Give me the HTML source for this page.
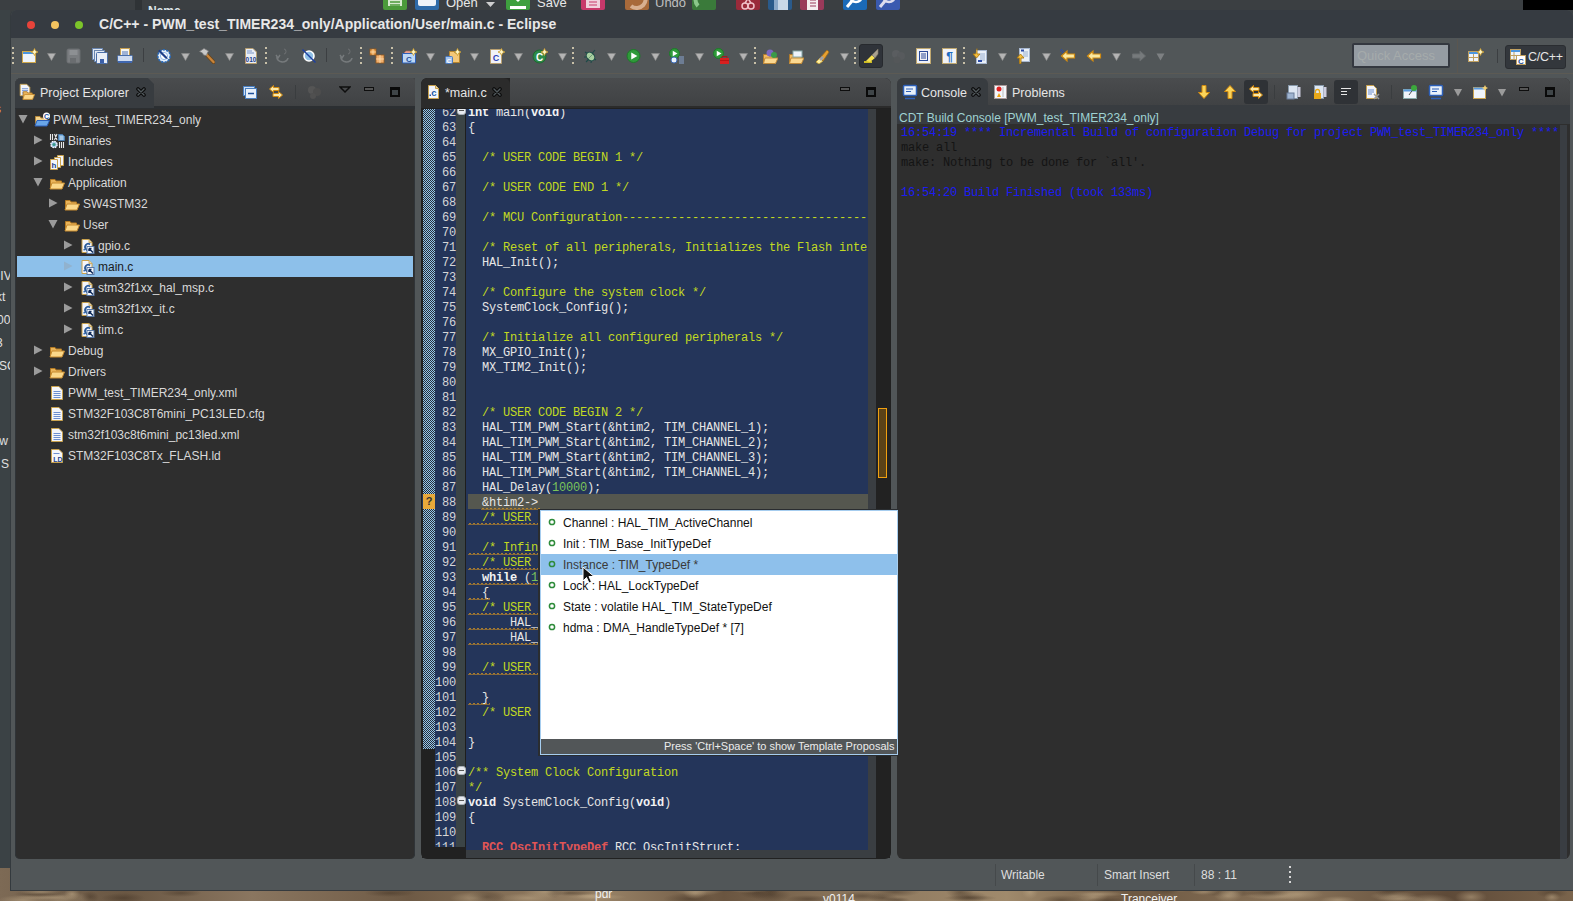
<!DOCTYPE html>
<html><head><meta charset="utf-8">
<style>
*{margin:0;padding:0;box-sizing:border-box}
html,body{width:1573px;height:901px;overflow:hidden;background:#3b3f42;font-family:"Liberation Sans",sans-serif;position:relative}
.a{position:absolute}
.mono{font-family:"Liberation Mono",monospace}
/* desktop */
#wall{left:0;top:868px;width:1573px;height:33px;background:radial-gradient(19px 7px at 487px 29px,rgba(60,45,32,.45),transparent),radial-gradient(27px 3px at 970px 30px,rgba(60,45,32,.45),transparent),radial-gradient(14px 6px at 960px 24px,rgba(60,45,32,.45),transparent),radial-gradient(20px 4px at 1107px 33px,rgba(60,45,32,.45),transparent),radial-gradient(24px 6px at 474px 30px,rgba(190,168,135,.55),transparent),radial-gradient(10px 4px at 1518px 20px,rgba(60,45,32,.45),transparent),radial-gradient(8px 5px at 1552px 29px,rgba(190,168,135,.55),transparent),radial-gradient(20px 6px at 968px 29px,rgba(60,45,32,.45),transparent),radial-gradient(22px 4px at 808px 31px,rgba(60,45,32,.45),transparent),radial-gradient(23px 4px at 748px 21px,rgba(190,168,135,.55),transparent),radial-gradient(28px 5px at 528px 30px,rgba(190,168,135,.55),transparent),radial-gradient(26px 5px at 862px 28px,rgba(60,45,32,.45),transparent),radial-gradient(15px 5px at 1093px 29px,rgba(190,168,135,.55),transparent),radial-gradient(27px 4px at 1396px 20px,rgba(60,45,32,.45),transparent),radial-gradient(25px 7px at 1430px 33px,rgba(190,168,135,.55),transparent),radial-gradient(14px 7px at 1165px 21px,rgba(60,45,32,.45),transparent),radial-gradient(23px 6px at 546px 24px,rgba(190,168,135,.55),transparent),radial-gradient(21px 4px at 181px 25px,rgba(60,45,32,.45),transparent),radial-gradient(21px 3px at 41px 24px,rgba(190,168,135,.55),transparent),radial-gradient(9px 6px at 90px 29px,rgba(60,45,32,.45),transparent),radial-gradient(16px 7px at 1471px 29px,rgba(190,168,135,.55),transparent),radial-gradient(10px 3px at 483px 20px,rgba(190,168,135,.55),transparent),radial-gradient(14px 6px at 1228px 28px,rgba(190,168,135,.55),transparent),radial-gradient(30px 3px at 597px 29px,rgba(190,168,135,.55),transparent),radial-gradient(12px 6px at 695px 25px,rgba(190,168,135,.55),transparent),radial-gradient(20px 7px at 771px 27px,rgba(60,45,32,.45),transparent),radial-gradient(24px 5px at 1394px 28px,rgba(190,168,135,.55),transparent),radial-gradient(15px 5px at 883px 30px,rgba(60,45,32,.45),transparent),radial-gradient(25px 5px at 895px 24px,rgba(60,45,32,.45),transparent),radial-gradient(26px 5px at 23px 32px,rgba(190,168,135,.55),transparent),radial-gradient(28px 4px at 41px 26px,rgba(60,45,32,.45),transparent),radial-gradient(22px 5px at 123px 30px,rgba(60,45,32,.45),transparent),radial-gradient(16px 6px at 1391px 25px,rgba(60,45,32,.45),transparent),radial-gradient(29px 3px at 45px 29px,rgba(190,168,135,.55),transparent),radial-gradient(17px 7px at 756px 24px,rgba(60,45,32,.45),transparent),radial-gradient(13px 5px at 1231px 25px,rgba(190,168,135,.55),transparent),radial-gradient(16px 5px at 1552px 25px,rgba(60,45,32,.45),transparent),radial-gradient(8px 7px at 772px 21px,rgba(60,45,32,.45),transparent),radial-gradient(24px 4px at 1400px 31px,rgba(190,168,135,.55),transparent),radial-gradient(18px 4px at 1338px 32px,rgba(190,168,135,.55),transparent),radial-gradient(11px 3px at 1388px 26px,rgba(60,45,32,.45),transparent),radial-gradient(29px 4px at 1230px 25px,rgba(60,45,32,.45),transparent),radial-gradient(13px 3px at 897px 32px,rgba(60,45,32,.45),transparent),radial-gradient(26px 6px at 689px 31px,rgba(60,45,32,.45),transparent),radial-gradient(9px 7px at 554px 23px,rgba(60,45,32,.45),transparent),radial-gradient(26px 4px at 390px 25px,rgba(60,45,32,.45),transparent),radial-gradient(28px 3px at 570px 25px,rgba(60,45,32,.45),transparent),radial-gradient(21px 5px at 1268px 25px,rgba(60,45,32,.45),transparent),radial-gradient(22px 5px at 1061px 32px,rgba(60,45,32,.45),transparent),radial-gradient(26px 6px at 1298px 26px,rgba(190,168,135,.55),transparent),radial-gradient(8px 6px at 72px 26px,rgba(190,168,135,.55),transparent),radial-gradient(30px 4px at 1275px 28px,rgba(190,168,135,.55),transparent),radial-gradient(29px 7px at 66px 31px,rgba(190,168,135,.55),transparent),radial-gradient(15px 3px at 591px 28px,rgba(190,168,135,.55),transparent),radial-gradient(15px 3px at 1205px 24px,rgba(190,168,135,.55),transparent),radial-gradient(14px 6px at 71px 32px,rgba(60,45,32,.45),transparent),radial-gradient(11px 4px at 1181px 20px,rgba(190,168,135,.55),transparent),radial-gradient(8px 7px at 1030px 24px,rgba(190,168,135,.55),transparent),radial-gradient(27px 3px at 1099px 26px,rgba(190,168,135,.55),transparent),radial-gradient(25px 6px at 699px 22px,rgba(190,168,135,.55),transparent),linear-gradient(90deg,#7d6a55,#6a5743 8%,#8a7660 16%,#6e5a45 26%,#9a8468 38%,#6a5540 46%,#8b765d 54%,#a08a6c 64%,#6d5842 72%,#8a745a 82%,#5e4a38 92%,#7a644c 100%)}
#leftwin{left:0;top:10px;width:10px;height:858px;background:#3b4245}
#topwin{left:0;top:0;width:1573px;height:10px;background:#3b3f42}
/* window */
#win{left:10px;top:10px;width:1563px;height:881px;background:#515658;border-radius:6px 6px 0 0;overflow:hidden;border-left:1px solid #343a3e;border-bottom:1px solid #353a3e}
#title{left:0;top:0;width:1563px;height:28px;background:#363b41}
.dot{width:8px;height:8px;border-radius:50%;top:11px}
#ttext{left:88px;top:6px;font-weight:bold;font-size:14px;letter-spacing:0.02px;color:#e8e8e8;white-space:nowrap}
#tb{left:0;top:28px;width:1563px;height:36px;background:#515658;border-bottom:1px solid #5c5a54}
.panel{background:#2e2e2e}
.hdr{background:linear-gradient(#4a4c4e,#404244)}
.tab{background:#383c40;border-radius:6px 6px 0 0}
.tabt{font-size:12.5px;color:#e6e6e6;white-space:nowrap}
.tree{font-size:12px;color:#d8d8d8;white-space:nowrap}
.row{position:absolute;height:21px;line-height:21px}
.tri{position:absolute;width:0;height:0}
.sq{position:absolute;height:2px;background:repeating-linear-gradient(90deg,#d4921c 0 3px,transparent 3px 4px);opacity:.85}
.code{font-size:12px;letter-spacing:-0.2px;line-height:15px;white-space:pre;color:#e6e6e6}
</style></head><body>
<svg width="0" height="0" style="position:absolute">
<defs>
 <pattern id="sqp" width="4" height="3" patternUnits="userSpaceOnUse"><rect x="0" y="2" width="4" height="1" fill="#d8941c" opacity="0.55"/><rect x="1" y="1" width="2" height="1" fill="#e09a20" opacity="0.7"/></pattern>
 <symbol id="i-fold" viewBox="0 0 16 16">
  <path d="M1.5 4.5 L1.5 13.5 L12.5 13.5 L12.5 6 L7 6 L6 4.5 Z" fill="#e9b45a" stroke="#b57b22"/>
  <path d="M3 8 L15.5 8 L13 14 L1 14 Z" fill="#fbd88a" stroke="#c68a2e"/>
 </symbol>
 <symbol id="i-proj" viewBox="0 0 16 16">
  <path d="M1.5 4.5 L1.5 13.5 L12.5 13.5 L12.5 6 L7 6 L6 4.5 Z" fill="#f3d38e" stroke="#b98a3a"/>
  <path d="M3 8.5 L15.5 8.5 L13 14 L1 14 Z" fill="#6aa6e8" stroke="#2c5fb8"/>
  <circle cx="12.5" cy="4" r="3.5" fill="#fff"/>
  <text x="12.5" y="6.5" font-size="7" font-weight="bold" text-anchor="middle" fill="#1d4f9a" font-family="Liberation Sans">C</text>
 </symbol>
 <symbol id="i-cfile" viewBox="0 0 16 16"><g transform="translate(1.5,0)">
  <path d="M1.5 1.5 L8.5 1.5 L11.5 4.5 L11.5 14.5 L1.5 14.5 Z" fill="#f4f6fb" stroke="#c9a24e"/>
  <path d="M8.5 1.5 V4.5 H11.5" fill="#ead9a8" stroke="#c9a24e" stroke-width="0.8"/>
  <path d="M9.5 6.5 A3 3.2 0 1 0 9.5 11.5" stroke="#2a5a98" stroke-width="1.8" fill="none"/>
  <rect x="3" y="11" width="1.4" height="1.4" fill="#1d5aa8"/>
  <rect x="6.5" y="8.5" width="7" height="7" fill="#f4f8fc" stroke="#5a7aa8"/>
  <path d="M8.5 10.5 L12.5 14.5 M8.5 10.5 V13 M8.5 10.5 H11" stroke="#0e2a5a" stroke-width="1.5" fill="none"/>
 </g></symbol>
 <symbol id="i-doc" viewBox="0 0 16 16">
  <path d="M2.5 1.5 L10 1.5 L13.5 5 L13.5 14.5 L2.5 14.5 Z" fill="#f4f6fb" stroke="#c9a24e"/>
  <path d="M4.5 6.5 H11.5 M4.5 8.5 H11.5 M4.5 10.5 H11.5 M4.5 12.5 H11.5" stroke="#6d8fcf" stroke-width="1"/>
 </symbol>
 <symbol id="i-ld" viewBox="0 0 16 16">
  <path d="M2.5 1.5 L10 1.5 L13.5 5 L13.5 14.5 L2.5 14.5 Z" fill="#f4f6fb" stroke="#c9a24e"/>
  <path d="M4.5 5.5 H10.5" stroke="#6d8fcf"/>
  <text x="9" y="14" font-size="7" font-weight="bold" text-anchor="middle" fill="#1d3f8a" font-family="Liberation Sans">LD</text>
 </symbol>
 <symbol id="i-bin" viewBox="0 0 16 16">
  <path d="M1.5 1 V7 M3.5 1 V7 M5.5 1 L8 7 M8 1 L5.5 7" stroke="#e8e8e8" stroke-width="1.1"/>
  <path d="M9.5 1.5 H13.5 L15.5 3.5 V7.5 H9.5 Z" fill="#7db0da" stroke="#4a80b8" stroke-width="0.8"/>
  <path d="M11 4 H14 M11 6 H14" stroke="#e8f0fa" stroke-width="0.8"/>
  <path d="M10.5 9 V15 M12.5 9 V15 M14.5 9 V15" stroke="#e8e8e8" stroke-width="1.1"/>
  <circle cx="5" cy="11.5" r="3.2" fill="#a8c8ea" stroke="#fff" stroke-width="1.2" stroke-dasharray="1.5 1"/>
  <circle cx="5" cy="11.5" r="1.6" fill="#3a9a8a"/>
 </symbol>
 <symbol id="i-inc" viewBox="0 0 16 16">
  <path d="M8.5 1.5 H14.5 V11.5 H8.5 Z" fill="#f4f6fb" stroke="#c9a24e"/>
  <path d="M5.5 3.5 H11.5 V13.5 H5.5 Z" fill="#f4f6fb" stroke="#c9a24e"/>
  <path d="M1.5 5.5 H8.5 V15.5 H1.5 Z" fill="#f4f6fb" stroke="#c9a24e"/>
  <text x="5" y="14" font-size="8" font-weight="bold" text-anchor="middle" fill="#1d3f8a" font-family="Liberation Sans">h</text>
 </symbol>
 <symbol id="t-down" viewBox="0 0 10 10"><path d="M0.5 1 L9.5 1 L5 9.5 Z" fill="#9b9b9b"/></symbol>
 <symbol id="t-right" viewBox="0 0 10 10"><path d="M1 0.5 L9.5 5 L1 9.5 Z" fill="#9b9b9b"/></symbol>
</defs>
</svg>

<div id="topwin" class="a"></div>
<div id="leftwin" class="a"></div>
<div id="wall" class="a"></div>

<!-- background windows -->
<div class="a" style="left:1523px;top:0;width:50px;height:10px;background:#000"></div>
<div class="a" style="left:135px;top:0;width:7px;height:10px;background:#2f3336"></div>
<div class="a" style="left:148px;top:4px;font-size:12px;font-weight:bold;line-height:14px;color:#dfe6ea;height:6px;overflow:hidden;white-space:nowrap">Name</div>
<svg class="a" style="left:383px;top:-14px" width="24" height="24"><rect width="24" height="24" rx="2" fill="#4b9a3a"/><rect x="5" y="4" width="14" height="16" fill="#d8ead0"/><path d="M7 16 H17 M7 19 H17" stroke="#4b9a3a" stroke-width="1.5"/></svg>
<svg class="a" style="left:415px;top:-14px" width="24" height="24"><rect width="24" height="24" rx="2" fill="#2e6aa8"/><rect x="3" y="10" width="18" height="10" rx="2" fill="#eef2f8"/></svg>
<div class="a" style="left:446px;top:-5px;font-size:13px;line-height:16px;color:#e8e8e8;white-space:nowrap">Open</div>
<svg class="a" style="left:486px;top:2px" width="9" height="5"><path d="M0 0 H9 L4.5 5 Z" fill="#cfcfcf"/></svg>
<svg class="a" style="left:506px;top:-14px" width="24" height="24"><rect width="24" height="24" rx="2" fill="#3ea03e"/><path d="M12 2 V14 M7 9 L12 14 L17 9" stroke="#fff" stroke-width="3" fill="none"/><rect x="4" y="20" width="16" height="3" fill="#fff"/></svg>
<div class="a" style="left:537px;top:-5px;font-size:13px;line-height:16px;color:#e8e8e8;white-space:nowrap">Save</div>
<svg class="a" style="left:581px;top:-14px" width="24" height="24"><rect width="24" height="24" rx="2" fill="#c8386a"/><rect x="5" y="12" width="14" height="10" fill="#f0d0dc"/><path d="M8 16 H16 M8 19 H16" stroke="#c8386a"/></svg>
<svg class="a" style="left:625px;top:-14px" width="24" height="24"><rect width="24" height="24" rx="2" fill="#a86a3a"/><path d="M6 6 A9 9 0 1 1 6 20" stroke="#d8b090" stroke-width="4" fill="none"/></svg>
<div class="a" style="left:655px;top:-5px;font-size:13px;line-height:16px;color:#bfbfbf;white-space:nowrap">Undo</div>
<svg class="a" style="left:692px;top:-14px" width="24" height="24"><rect width="24" height="24" rx="2" fill="#3a7a3a"/><path d="M6 20 A9 9 0 0 1 8 6" stroke="#8ac88a" stroke-width="4" fill="none"/><path d="M12 6 L22 6 L16 14 Z" fill="#c8e8c8"/></svg>
<svg class="a" style="left:736px;top:-14px" width="24" height="24"><rect width="24" height="24" rx="2" fill="#9a2a3a"/><circle cx="9" cy="20" r="3" fill="none" stroke="#f0c0c8" stroke-width="1.5"/><circle cx="15" cy="20" r="3" fill="none" stroke="#f0c0c8" stroke-width="1.5"/><path d="M9 17 L15 8 M15 17 L9 8" stroke="#f0c0c8" stroke-width="1.5"/></svg>
<svg class="a" style="left:768px;top:-14px" width="24" height="24"><rect width="24" height="24" rx="2" fill="#2a5a8a"/><rect x="6" y="4" width="10" height="20" fill="#8aa8c8"/><rect x="10" y="8" width="10" height="16" fill="#c8d8e8"/></svg>
<svg class="a" style="left:800px;top:-14px" width="24" height="24"><rect width="24" height="24" rx="2" fill="#9a3a5a"/><rect x="7" y="6" width="11" height="18" fill="#f5eef0"/><path d="M10 14 H16 M10 17 H16 M10 20 H16" stroke="#9a3a5a"/></svg>
<svg class="a" style="left:843px;top:-14px" width="24" height="24"><rect width="24" height="24" rx="2" fill="#1a6ab8"/><circle cx="13" cy="10" r="6" fill="none" stroke="#fff" stroke-width="2.5"/><path d="M9 15 L4 21" stroke="#fff" stroke-width="3"/></svg>
<svg class="a" style="left:876px;top:-14px" width="24" height="24"><rect width="24" height="24" rx="2" fill="#3a5ab0"/><circle cx="13" cy="10" r="6" fill="none" stroke="#dde" stroke-width="2.5"/><path d="M9 15 L4 21" stroke="#dde" stroke-width="3"/></svg>
<!-- left strip texts -->
<div class="a" style="left:0;top:0;width:10px;height:868px;overflow:hidden">
 <div class="a" style="left:-5px;top:101px;font-size:12px;line-height:16px;color:#e8a040">s</div>
 <div class="a" style="left:-3px;top:268px;font-size:12px;line-height:16px;color:#e0e0e0">IIV</div>
 <div class="a" style="left:-4px;top:289px;font-size:12px;line-height:16px;color:#e0e0e0">kt</div>
 <div class="a" style="left:-3px;top:312px;font-size:12px;line-height:16px;color:#e0e0e0">00</div>
 <div class="a" style="left:-4px;top:335px;font-size:12px;line-height:16px;color:#e0e0e0">3</div>
 <div class="a" style="left:-1px;top:358px;font-size:12px;line-height:16px;color:#e0e0e0">SC</div>
 <div class="a" style="left:-4px;top:433px;font-size:12px;line-height:16px;color:#e0e0e0">tw</div>
 <div class="a" style="left:1px;top:456px;font-size:12px;line-height:16px;color:#e0e0e0">S</div>
</div>
<div class="a" style="left:0;top:890px;width:1573px;height:11px;overflow:hidden">
 <div class="a" style="left:595px;top:-3px;font-size:12px;line-height:14px;color:#f0f0f0">pdr</div>
 <div class="a" style="left:823px;top:2px;font-size:12px;line-height:14px;color:#f0f0f0">v0114</div>
 <div class="a" style="left:1121px;top:2px;font-size:12px;line-height:14px;color:#f0f0f0">Tranceiver</div>
</div>


<div id="win" class="a">
  <div id="title" class="a">
    <div class="a dot" style="left:16px;background:#e8433a"></div>
    <div class="a dot" style="left:40px;background:#f5c45f"></div>
    <div class="a dot" style="left:64px;background:#7cc42a"></div>
    <div id="ttext" class="a">C/C++ - PWM_test_TIMER234_only/Application/User/main.c - Eclipse</div>
  </div>
  <div id="tb" class="a"></div>
</div>
<!-- toolbar -->
<div class="a" style="left:12px;top:47px;width:2px;height:18px;background:repeating-linear-gradient(#c8c0a8 0 2px,transparent 2px 5px)"></div>
<svg class="a" style="left:22px;top:48px" width="16" height="16" viewBox="0 0 16 16"><rect x="0.5" y="3.5" width="13" height="11" fill="#eef4fb" stroke="#d0a84a"/><rect x="1" y="4" width="12" height="2" fill="#4b96e0"/><path d="M12.5 0.5 L13.6 2.9 L16 4 L13.6 5.1 L12.5 7.5 L11.4 5.1 L9 4 L11.4 2.9 Z" fill="#fff6c8" stroke="#c89a2a" stroke-width="0.8"/></svg>
<svg class="a" style="left:47px;top:53px" width="9" height="8"><path d="M0.5 0.5 H8.5 L4.5 7.5 Z" fill="#b4b4b4" stroke="#8a8a8a" stroke-width="0.6"/></svg>
<svg class="a" style="left:66px;top:48px" width="16" height="16" viewBox="0 0 16 16"><rect x="1" y="1" width="13" height="14" rx="1.5" fill="#7a7d80" stroke="#6b6e71"/><rect x="3.5" y="2" width="8" height="5" fill="#8d9093"/><rect x="4" y="10" width="6" height="5" fill="#6a6d70"/></svg>
<svg class="a" style="left:92px;top:48px" width="16" height="16" viewBox="0 0 16 16"><rect x="0.5" y="0.5" width="10" height="11" fill="#dfe8f3" stroke="#6a86b0"/><rect x="2.5" y="2.5" width="10" height="11" fill="#e3ebf5" stroke="#6a86b0"/><rect x="4.5" y="4.5" width="11" height="11" rx="1" fill="#e8eef7" stroke="#4a6ea8"/><rect x="8" y="11" width="4" height="4" fill="#3b5fa8"/></svg>
<svg class="a" style="left:117px;top:48px" width="16" height="16" viewBox="0 0 16 16"><rect x="3.5" y="0.5" width="9" height="8" fill="#f5f5f0" stroke="#c8a050"/><path d="M5 4 H11 M5 6 H11" stroke="#4a70b8"/><rect x="0.5" y="7.5" width="15" height="6" rx="1" fill="#cfdcf0" stroke="#4a6ea8"/><rect x="1" y="13" width="14" height="2" fill="#3f67b0"/></svg>
<div class="a" style="left:143px;top:48px;width:1px;height:14px;background:#3c3f42"></div>
<svg class="a" style="left:156px;top:48px" width="16" height="16" viewBox="0 0 16 16"><circle cx="8" cy="8" r="6.2" fill="#e8f2fc" stroke="#2a6ab8" stroke-width="1.6" stroke-dasharray="2.2 1.2"/><circle cx="8" cy="8" r="3.6" fill="#fff" stroke="#7aaae0" stroke-width="0.8"/><path d="M3.5 3 L10 9.5" stroke="#1d3f88" stroke-width="2.2" stroke-linecap="round"/><path d="M9.5 9 L11.5 11" stroke="#1d3f88" stroke-width="1"/></svg>
<svg class="a" style="left:181px;top:53px" width="9" height="8"><path d="M0.5 0.5 H8.5 L4.5 7.5 Z" fill="#b4b4b4" stroke="#8a8a8a" stroke-width="0.6"/></svg>
<svg class="a" style="left:199px;top:48px" width="16" height="16" viewBox="0 0 16 16"><path d="M7 6 L14.5 14" stroke="#6a4418" stroke-width="4" stroke-linecap="round"/><path d="M7 6 L14.5 14" stroke="#c8843a" stroke-width="2.4" stroke-linecap="round"/><path d="M0.5 3.5 L5 0.5 L9.5 3 L8.5 4.5 L7.5 7.5 L4.5 7 L3.5 5 Z" fill="#c8c8c8" stroke="#7a7a7a" stroke-width="0.8"/></svg>
<svg class="a" style="left:225px;top:53px" width="9" height="8"><path d="M0.5 0.5 H8.5 L4.5 7.5 Z" fill="#b4b4b4" stroke="#8a8a8a" stroke-width="0.6"/></svg>
<svg class="a" style="left:244px;top:48px" width="14" height="16" viewBox="0 0 14 16"><path d="M1.5 0.5 H9 L12.5 4 V15.5 H1.5 Z" fill="#e9eef6" stroke="#b9a070"/><path d="M3 3 H8 M3 5 H10" stroke="#7a95c8"/><text x="7" y="14" font-size="6.5" font-weight="bold" text-anchor="middle" fill="#1d3f8a" font-family="Liberation Sans">010</text></svg>
<div class="a" style="left:265px;top:47px;width:2px;height:18px;background:repeating-linear-gradient(#c8c0a8 0 2px,transparent 2px 5px)"></div>
<svg class="a" style="left:275px;top:48px" width="16" height="16" viewBox="0 0 16 16"><path d="M2 9 A5 4 0 0 0 13 10" stroke="#767a7c" stroke-width="1.6" fill="none"/><path d="M1 7 L3 10 L5 7" stroke="#767a7c" stroke-width="1.4" fill="none"/><path d="M9 1 A2 2.5 0 1 1 9 6" stroke="#6e7173" fill="none"/></svg>
<svg class="a" style="left:301px;top:48px" width="16" height="16" viewBox="0 0 16 16"><circle cx="8" cy="8" r="5" fill="#8fc0e6" stroke="#fff" stroke-width="1.6"/><path d="M1.5 1.5 L14.5 14.5" stroke="#1d3fa0" stroke-width="1.4"/></svg>
<div class="a" style="left:326px;top:48px;width:1px;height:14px;background:#3c3f42"></div>
<svg class="a" style="left:339px;top:48px" width="16" height="16" viewBox="0 0 16 16"><path d="M2 9 A5 4 0 0 0 13 10" stroke="#767a7c" stroke-width="1.6" fill="none"/><path d="M1 7 L3 10 L5 7" stroke="#767a7c" stroke-width="1.4" fill="none"/><path d="M9 1 A2 2.5 0 1 1 9 6" stroke="#6e7173" fill="none"/></svg>
<div class="a" style="left:360px;top:47px;width:2px;height:18px;background:repeating-linear-gradient(#c8c0a8 0 2px,transparent 2px 5px)"></div>
<svg class="a" style="left:369px;top:48px" width="16" height="16" viewBox="0 0 16 16"><rect x="1" y="1" width="6" height="6" fill="#e8a050" stroke="#9a5a1a" stroke-width="0.8"/><rect x="7" y="7" width="8" height="8" fill="#f0b070" stroke="#9a5a1a" stroke-width="0.8"/><path d="M4 1 V7 M1 4 H7 M11 7 V15 M7 11 H15" stroke="#fde0b0" stroke-width="0.8"/></svg>
<div class="a" style="left:391px;top:47px;width:2px;height:18px;background:repeating-linear-gradient(#c8c0a8 0 2px,transparent 2px 5px)"></div>
<svg class="a" style="left:401px;top:48px" width="16" height="16" viewBox="0 0 16 16"><path d="M1.5 5.5 H14.5 V15 H1.5 Z" fill="#bdd7f5" stroke="#2c5fb8"/><path d="M3 5 L5 3 H9 L10 5" fill="#e8a090" stroke="#b07060" stroke-width="0.6"/><text x="8" y="13.5" font-size="8" font-weight="bold" text-anchor="middle" fill="#1d4f9a" font-family="Liberation Sans">C</text><path d="M12.5 0.5 L13.6 2.9 L16 4 L13.6 5.1 L12.5 7.5 L11.4 5.1 L9 4 L11.4 2.9 Z" fill="#fff6c8" stroke="#c89a2a" stroke-width="0.8"/></svg>
<svg class="a" style="left:426px;top:53px" width="9" height="8"><path d="M0.5 0.5 H8.5 L4.5 7.5 Z" fill="#b4b4b4" stroke="#8a8a8a" stroke-width="0.6"/></svg>
<svg class="a" style="left:445px;top:48px" width="16" height="16" viewBox="0 0 16 16"><path d="M4.5 3.5 H9 L10 5 H14.5 V14.5 H4.5 Z" fill="#f5c878" stroke="#b8862e"/><rect x="0.5" y="8.5" width="7" height="7" rx="1" fill="#a8c6ee" stroke="#4a7ac0"/><text x="4" y="14.5" font-size="6" font-weight="bold" text-anchor="middle" fill="#fff" font-family="Liberation Sans">C</text><path d="M12.5 0.5 L13.6 2.9 L16 4 L13.6 5.1 L12.5 7.5 L11.4 5.1 L9 4 L11.4 2.9 Z" fill="#fff6c8" stroke="#c89a2a" stroke-width="0.8"/></svg>
<svg class="a" style="left:470px;top:53px" width="9" height="8"><path d="M0.5 0.5 H8.5 L4.5 7.5 Z" fill="#b4b4b4" stroke="#8a8a8a" stroke-width="0.6"/></svg>
<svg class="a" style="left:489px;top:48px" width="16" height="16" viewBox="0 0 16 16"><path d="M1.5 1.5 H12.5 V15.5 H1.5 Z" fill="#f0f2f8" stroke="#b9a070"/><text x="7" y="13" font-size="9" font-weight="bold" text-anchor="middle" fill="#2a3fb8" font-family="Liberation Sans">C</text><path d="M12.5 0.5 L13.6 2.9 L16 4 L13.6 5.1 L12.5 7.5 L11.4 5.1 L9 4 L11.4 2.9 Z" fill="#fff6c8" stroke="#c89a2a" stroke-width="0.8"/></svg>
<svg class="a" style="left:514px;top:53px" width="9" height="8"><path d="M0.5 0.5 H8.5 L4.5 7.5 Z" fill="#b4b4b4" stroke="#8a8a8a" stroke-width="0.6"/></svg>
<svg class="a" style="left:532px;top:48px" width="16" height="16" viewBox="0 0 16 16"><circle cx="7.5" cy="8.5" r="6.5" fill="#2e8a48" stroke="#1d6a32"/><text x="7.5" y="12.5" font-size="10" font-weight="bold" text-anchor="middle" fill="#fff" font-family="Liberation Sans">C</text><path d="M12.5 0.5 L13.6 2.9 L16 4 L13.6 5.1 L12.5 7.5 L11.4 5.1 L9 4 L11.4 2.9 Z" fill="#fff6c8" stroke="#c89a2a" stroke-width="0.8"/></svg>
<svg class="a" style="left:558px;top:53px" width="9" height="8"><path d="M0.5 0.5 H8.5 L4.5 7.5 Z" fill="#b4b4b4" stroke="#8a8a8a" stroke-width="0.6"/></svg>
<div class="a" style="left:572px;top:47px;width:2px;height:18px;background:repeating-linear-gradient(#c8c0a8 0 2px,transparent 2px 5px)"></div>
<svg class="a" style="left:582px;top:48px" width="16" height="16" viewBox="0 0 16 16"><path d="M3 4 L6 6 M2 9 L5 9 M4 14 L6.5 11.5 M9 15 L9.5 12 M14 12 L11.5 10.5 M13 2 L10.5 5" stroke="#1e4a48" stroke-width="1.1"/><ellipse cx="8.5" cy="8.5" rx="3.6" ry="4.8" transform="rotate(-45 8.5 8.5)" fill="#a8d0a0" stroke="#1e4a48" stroke-width="1"/><path d="M6 11 L11 6" stroke="#5a8a6a" stroke-width="0.8"/></svg>
<svg class="a" style="left:607px;top:53px" width="9" height="8"><path d="M0.5 0.5 H8.5 L4.5 7.5 Z" fill="#b4b4b4" stroke="#8a8a8a" stroke-width="0.6"/></svg>
<svg class="a" style="left:626px;top:48px" width="16" height="16" viewBox="0 0 16 16"><circle cx="7.5" cy="8" r="6.5" fill="#2f9a3a" stroke="#1e7a2a"/><path d="M5.225 4.425 L11.4 8 L5.225 11.575 Z" fill="#fff"/></svg>
<svg class="a" style="left:651px;top:53px" width="9" height="8"><path d="M0.5 0.5 H8.5 L4.5 7.5 Z" fill="#b4b4b4" stroke="#8a8a8a" stroke-width="0.6"/></svg>
<svg class="a" style="left:669px;top:48px" width="16" height="16" viewBox="0 0 16 16"><circle cx="5.5" cy="5.5" r="5" fill="#2f9a3a" stroke="#1e7a2a"/><path d="M3.75 2.75 L8.5 5.5 L3.75 8.25 Z" fill="#fff"/><circle cx="5" cy="12" r="3" fill="#eaf2fb" stroke="#3a6ab8"/><path d="M10 9 H15 M10 11 H15 M10 13 H15 M10 15 H15" stroke="#8aa4d0"/></svg>
<svg class="a" style="left:695px;top:53px" width="9" height="8"><path d="M0.5 0.5 H8.5 L4.5 7.5 Z" fill="#b4b4b4" stroke="#8a8a8a" stroke-width="0.6"/></svg>
<svg class="a" style="left:713px;top:48px" width="16" height="16" viewBox="0 0 16 16"><circle cx="5.5" cy="5.5" r="5" fill="#2f9a3a" stroke="#1e7a2a"/><path d="M3.75 2.75 L8.5 5.5 L3.75 8.25 Z" fill="#fff"/><rect x="7" y="10" width="9" height="6" fill="#d82020"/><path d="M9 10 V8.5 H14 V10 M7 12.5 H16" stroke="#b01010" stroke-width="0.8" fill="none"/></svg>
<svg class="a" style="left:739px;top:53px" width="9" height="8"><path d="M0.5 0.5 H8.5 L4.5 7.5 Z" fill="#b4b4b4" stroke="#8a8a8a" stroke-width="0.6"/></svg>
<div class="a" style="left:754px;top:47px;width:2px;height:18px;background:repeating-linear-gradient(#c8c0a8 0 2px,transparent 2px 5px)"></div>
<svg class="a" style="left:762px;top:48px" width="16" height="16" viewBox="0 0 16 16"><path d="M1.5 6.5 H6 L7 8 H13.5 V15.5 H1.5 Z" fill="#f0b860" stroke="#b07a2a"/><path d="M3 10 H16 L13.5 15.5 H1.5 Z" fill="#fbd890" stroke="#c08a3a"/><circle cx="8" cy="5" r="3.5" fill="#7a68c0"/><circle cx="12" cy="7" r="3" fill="#3a9a48"/></svg>
<svg class="a" style="left:788px;top:48px" width="16" height="16" viewBox="0 0 16 16"><path d="M1.5 6.5 H6 L7 8 H13.5 V15.5 H1.5 Z" fill="#f0b860" stroke="#b07a2a"/><path d="M3 10 H16 L13.5 15.5 H1.5 Z" fill="#fbd890" stroke="#c08a3a"/><rect x="5" y="3" width="9" height="6" fill="#eef4fb" stroke="#8aa"/></svg>
<svg class="a" style="left:814px;top:48px" width="16" height="16" viewBox="0 0 16 16"><path d="M2 14 L6 10 L9 13 L5 16 Z" fill="#fff0a0" stroke="#c8a030" stroke-width="0.8"/><path d="M6 10 L13 2 L15 4 L9 13 Z" fill="#e8a030" stroke="#9a6a1a" stroke-width="0.8"/><path d="M5 11 L8 8 L10 10 L7 13 Z" fill="#a0a0a8"/></svg>
<svg class="a" style="left:840px;top:53px" width="9" height="8"><path d="M0.5 0.5 H8.5 L4.5 7.5 Z" fill="#b4b4b4" stroke="#8a8a8a" stroke-width="0.6"/></svg>
<div class="a" style="left:854px;top:47px;width:2px;height:18px;background:repeating-linear-gradient(#c8c0a8 0 2px,transparent 2px 5px)"></div>
<div class="a" style="left:859px;top:44px;width:24px;height:24px;border-radius:3px;background:#2f3339;border:1px solid #272a2e"></div>
<svg class="a" style="left:863px;top:48px" width="16" height="16" viewBox="0 0 16 16"><path d="M1 14 H9" stroke="#f5e020" stroke-width="1.6"/><path d="M3 13 L9 7 L12 10 L7 14 Z" fill="#f5e050"/><path d="M9 7 L15 1 V6 L12 10 Z" fill="#a8a090" stroke="#807868" stroke-width="0.6"/></svg>
<svg class="a" style="left:890px;top:48px" width="16" height="16" viewBox="0 0 16 16"><circle cx="6" cy="6" r="4" fill="#5a5d60"/><circle cx="11" cy="8" r="4" fill="#575a5d"/><circle cx="7" cy="12" r="3.5" fill="#545759"/></svg>
<svg class="a" style="left:916px;top:48px" width="15" height="16" viewBox="0 0 15 16"><rect x="0.5" y="0.5" width="14" height="15" fill="#f0f2f6" stroke="#c0a870"/><rect x="3.5" y="3.5" width="8" height="9" fill="none" stroke="#2a4a98"/><path d="M5 6 H10 M5 8 H10 M5 10 H10" stroke="#2a4a98"/></svg>
<svg class="a" style="left:942px;top:48px" width="15" height="16" viewBox="0 0 15 16"><rect x="0.5" y="0.5" width="14" height="15" fill="#f0f2f6" stroke="#c0a870"/><text x="7.5" y="13" font-size="12" font-weight="bold" text-anchor="middle" fill="#1d6ac0" font-family="Liberation Sans">¶</text></svg>
<div class="a" style="left:963px;top:47px;width:2px;height:18px;background:repeating-linear-gradient(#c8c0a8 0 2px,transparent 2px 5px)"></div>
<svg class="a" style="left:972px;top:48px" width="16" height="16" viewBox="0 0 16 16"><rect x="4.5" y="2.5" width="10" height="13" fill="#eaf0f8" stroke="#a8b8d0"/><path d="M8 6 H13 M8 8 H13 M8 10 H13 M8 12 H13" stroke="#9ab0d0"/><rect x="6" y="12" width="4" height="2" fill="#2a4aa8"/><path d="M5 0.5 V6 H8 L4.5 10 L1 6 H3.5" fill="#f5c040" stroke="#b07a10" stroke-width="0.9"/></svg>
<svg class="a" style="left:998px;top:53px" width="9" height="8"><path d="M0.5 0.5 H8.5 L4.5 7.5 Z" fill="#b4b4b4" stroke="#8a8a8a" stroke-width="0.6"/></svg>
<svg class="a" style="left:1016px;top:48px" width="16" height="16" viewBox="0 0 16 16"><rect x="3.5" y="0.5" width="10" height="13" fill="#eaf0f8" stroke="#a8b8d0"/><path d="M7 4 H12 M7 6 H12 M7 8 H12" stroke="#9ab0d0"/><rect x="5" y="1.5" width="3" height="2" fill="#2a4aa8"/><path d="M5 15.5 V10 H8 L4.5 6 L1 10 H3.5 V15.5 Z" fill="#f5c040" stroke="#b07a10" stroke-width="0.9"/></svg>
<svg class="a" style="left:1042px;top:53px" width="9" height="8"><path d="M0.5 0.5 H8.5 L4.5 7.5 Z" fill="#b4b4b4" stroke="#8a8a8a" stroke-width="0.6"/></svg>
<svg class="a" style="left:1060px;top:48px" width="16" height="16" viewBox="0 0 16 16"><path d="M1.5 8 L7 3 V6 H14.5 V10 H7 V13 Z" fill="#fbe8a0" stroke="#d08a10" stroke-width="1.2"/><path d="M0 2 L3 5 M1 1 L4 4" stroke="#2a4aa8" stroke-width="0.9"/></svg>
<svg class="a" style="left:1086px;top:48px" width="16" height="16" viewBox="0 0 16 16"><path d="M1.5 8 L7 3 V6 H14.5 V10 H7 V13 Z" fill="#fbe8a0" stroke="#d08a10" stroke-width="1.2"/></svg>
<svg class="a" style="left:1112px;top:53px" width="9" height="8"><path d="M0.5 0.5 H8.5 L4.5 7.5 Z" fill="#b4b4b4" stroke="#8a8a8a" stroke-width="0.6"/></svg>
<svg class="a" style="left:1131px;top:48px" width="16" height="16" viewBox="0 0 16 16"><path d="M14.5 8 L9 3 V6 H1.5 V10 H9 V13 Z" fill="#767a7c" stroke="#6a6e70" stroke-width="1"/></svg>
<svg class="a" style="left:1156px;top:53px" width="9" height="8"><path d="M0.5 0.5 H8.5 L4.5 7.5 Z" fill="#7d8082"/></svg>
<div class="a" style="left:1352px;top:43px;width:98px;height:25px;border-radius:2px;background:#959ca3;border:2px solid #343840"></div>
<div class="a" style="left:1357px;top:47px;font-size:13px;line-height:17px;color:#a5abab;white-space:nowrap">Quick Access</div>
<div class="a" style="left:1457px;top:39px;width:1px;height:34px;background:#5a5650"></div>
<svg class="a" style="left:1468px;top:48px" width="16" height="16" viewBox="0 0 16 16"><rect x="0.5" y="3.5" width="10" height="10" fill="#eef4fb" stroke="#c0a060"/><rect x="1" y="4" width="9" height="2" fill="#4b96e0"/><path d="M5.5 6 V13.5 M1 9.5 H10.5" stroke="#c0a060"/><path d="M12.5 0.5 L13.6 2.9 L16 4 L13.6 5.1 L12.5 7.5 L11.4 5.1 L9 4 L11.4 2.9 Z" fill="#fff6c8" stroke="#c89a2a" stroke-width="0.8"/></svg>
<div class="a" style="left:1497px;top:49px;width:1px;height:14px;background:#3c3f42"></div>
<div class="a" style="left:1505px;top:45px;width:61px;height:24px;border-radius:3px;background:#33373c;border:1px solid #2a2d31"></div>
<svg class="a" style="left:1510px;top:49px" width="16" height="16" viewBox="0 0 16 16"><rect x="0.5" y="0.5" width="10" height="10" fill="#eef4fb" stroke="#c0a060"/><rect x="1" y="1" width="9" height="2" fill="#4b96e0"/><path d="M4 3 V10.5 M1 6.5 H10.5" stroke="#c0a060"/><rect x="6.5" y="6.5" width="9" height="9" fill="#fff" stroke="#c0a060"/><text x="11" y="14.5" font-size="8" font-weight="bold" text-anchor="middle" fill="#1d4f9a" font-family="Liberation Sans">C</text></svg>
<div class="a" style="left:1528px;top:49px;font-size:12.5px;letter-spacing:-0.3px;line-height:16px;color:#e6e6e6;white-space:nowrap">C/C++</div>


<!-- Project explorer -->
<div class="a" style="left:15px;top:78px;width:400px;height:781px;border-radius:6px 2px 5px 5px;background:#2e2e2e;overflow:hidden;box-shadow:inset 1px 0 0 #303438,inset -1px 0 0 #303438">
 <div class="a hdr" style="left:0;top:0;width:400px;height:28px"></div>
 <div class="a" style="left:0;top:28px;width:400px;height:3px;background:#2c2f32"></div>
 <div class="a tab" style="left:0;top:0;width:139px;height:30px;clip-path:polygon(0 0,133px 0,139px 6px,139px 100%,0 100%)"></div>
 <div class="a" style="left:0;top:30px;width:400px;height:1px;background:#2c2f32"></div>
</div>
<svg class="a" style="left:18px;top:83px" width="14" height="14"><use href="#i-doc"/></svg>
<svg class="a" style="left:22px;top:88px" width="13" height="13"><use href="#i-fold"/></svg>
<div class="a tabt" style="left:40px;top:85px;line-height:16px">Project Explorer</div>
<svg class="a" style="left:136px;top:87px" width="10" height="10"><path d="M2 2 L8 8 M8 2 L2 8" stroke="#0b0b0b" stroke-width="3.6" stroke-linecap="round"/><path d="M2 2 L8 8 M8 2 L2 8" stroke="#525a5e" stroke-width="1.4" stroke-linecap="round"/></svg>
<svg class="a" style="left:242px;top:84px" width="16" height="16"><rect x="1.5" y="2.5" width="11" height="9" fill="#cfe0f5" stroke="#4a7fc0"/><rect x="3.5" y="4.5" width="11" height="10" fill="#e8f0fa" stroke="#4a7fc0"/><path d="M6 9.5 H12" stroke="#1d4f9a" stroke-width="1.5"/></svg>
<svg class="a" style="left:268px;top:84px" width="16" height="16"><path d="M1.5 5 L5.5 1.5 V3.5 H11 V6.5 H5.5 V8.5 Z" fill="#fce8a8" stroke="#d08a10" stroke-width="1"/><path d="M14.5 11 L10.5 7.5 V9.5 H5 V12.5 H10.5 V14.5 Z" fill="#fce8a8" stroke="#d08a10" stroke-width="1"/></svg>
<div class="a" style="left:295px;top:85px;width:1px;height:14px;background:#3a3d3f"></div>
<svg class="a" style="left:306px;top:84px" width="16" height="16"><circle cx="6" cy="6" r="4" fill="#555"/><circle cx="11" cy="8" r="4" fill="#4d4d4d"/><circle cx="7" cy="12" r="3" fill="#505050"/></svg>
<svg class="a" style="left:339px;top:86px" width="12" height="8"><path d="M1 1 H11 L6 6 Z" fill="none" stroke="#0e0e0e" stroke-width="1.5"/></svg>
<div class="a" style="left:364px;top:87px;width:10px;height:4px;border:1.5px solid #0e0e0e;background:#555"></div>
<div class="a" style="left:390px;top:87px;width:10px;height:10px;border:2px solid #0a0a0a;background:#3f4548;box-shadow:inset 0 1px 0 #0a0a0a"></div>
<div class="a" style="left:17px;top:256px;width:396px;height:21px;background:#8dc0ea"></div>
<svg class="a" style="left:18px;top:114px" width="10" height="10"><use href="#t-down"/></svg>
<svg class="a" style="left:34px;top:112px" width="16" height="16"><use href="#i-proj"/></svg>
<div class="a tree" style="left:53px;top:110px;line-height:20px;color:#d9d9d9">PWM_test_TIMER234_only</div>
<svg class="a" style="left:33px;top:135px" width="10" height="10"><use href="#t-right"/></svg>
<svg class="a" style="left:49px;top:133px" width="16" height="16"><use href="#i-bin"/></svg>
<div class="a tree" style="left:68px;top:131px;line-height:20px;color:#d9d9d9">Binaries</div>
<svg class="a" style="left:33px;top:156px" width="10" height="10"><use href="#t-right"/></svg>
<svg class="a" style="left:49px;top:154px" width="16" height="16"><use href="#i-inc"/></svg>
<div class="a tree" style="left:68px;top:152px;line-height:20px;color:#d9d9d9">Includes</div>
<svg class="a" style="left:33px;top:177px" width="10" height="10"><use href="#t-down"/></svg>
<svg class="a" style="left:49px;top:175px" width="16" height="16"><use href="#i-fold"/></svg>
<div class="a tree" style="left:68px;top:173px;line-height:20px;color:#d9d9d9">Application</div>
<svg class="a" style="left:48px;top:198px" width="10" height="10"><use href="#t-right"/></svg>
<svg class="a" style="left:64px;top:196px" width="16" height="16"><use href="#i-fold"/></svg>
<div class="a tree" style="left:83px;top:194px;line-height:20px;color:#d9d9d9">SW4STM32</div>
<svg class="a" style="left:48px;top:219px" width="10" height="10"><use href="#t-down"/></svg>
<svg class="a" style="left:64px;top:217px" width="16" height="16"><use href="#i-fold"/></svg>
<div class="a tree" style="left:83px;top:215px;line-height:20px;color:#d9d9d9">User</div>
<svg class="a" style="left:63px;top:240px" width="10" height="10"><use href="#t-right"/></svg>
<svg class="a" style="left:79px;top:238px" width="16" height="16"><use href="#i-cfile"/></svg>
<div class="a tree" style="left:98px;top:236px;line-height:20px;color:#d9d9d9">gpio.c</div>
<svg class="a" style="left:63px;top:261px" width="10" height="10" opacity="0.35"><use href="#t-right"/></svg>
<svg class="a" style="left:79px;top:259px" width="16" height="16"><use href="#i-cfile"/></svg>
<div class="a tree" style="left:98px;top:257px;line-height:20px;color:#1a1a1a">main.c</div>
<svg class="a" style="left:63px;top:282px" width="10" height="10"><use href="#t-right"/></svg>
<svg class="a" style="left:79px;top:280px" width="16" height="16"><use href="#i-cfile"/></svg>
<div class="a tree" style="left:98px;top:278px;line-height:20px;color:#d9d9d9">stm32f1xx_hal_msp.c</div>
<svg class="a" style="left:63px;top:303px" width="10" height="10"><use href="#t-right"/></svg>
<svg class="a" style="left:79px;top:301px" width="16" height="16"><use href="#i-cfile"/></svg>
<div class="a tree" style="left:98px;top:299px;line-height:20px;color:#d9d9d9">stm32f1xx_it.c</div>
<svg class="a" style="left:63px;top:324px" width="10" height="10"><use href="#t-right"/></svg>
<svg class="a" style="left:79px;top:322px" width="16" height="16"><use href="#i-cfile"/></svg>
<div class="a tree" style="left:98px;top:320px;line-height:20px;color:#d9d9d9">tim.c</div>
<svg class="a" style="left:33px;top:345px" width="10" height="10"><use href="#t-right"/></svg>
<svg class="a" style="left:49px;top:343px" width="16" height="16"><use href="#i-fold"/></svg>
<div class="a tree" style="left:68px;top:341px;line-height:20px;color:#d9d9d9">Debug</div>
<svg class="a" style="left:33px;top:366px" width="10" height="10"><use href="#t-right"/></svg>
<svg class="a" style="left:49px;top:364px" width="16" height="16"><use href="#i-fold"/></svg>
<div class="a tree" style="left:68px;top:362px;line-height:20px;color:#d9d9d9">Drivers</div>
<svg class="a" style="left:49px;top:385px" width="16" height="16"><use href="#i-doc"/></svg>
<div class="a tree" style="left:68px;top:383px;line-height:20px;color:#d9d9d9">PWM_test_TIMER234_only.xml</div>
<svg class="a" style="left:49px;top:406px" width="16" height="16"><use href="#i-doc"/></svg>
<div class="a tree" style="left:68px;top:404px;line-height:20px;color:#d9d9d9">STM32F103C8T6mini_PC13LED.cfg</div>
<svg class="a" style="left:49px;top:427px" width="16" height="16"><use href="#i-doc"/></svg>
<div class="a tree" style="left:68px;top:425px;line-height:20px;color:#d9d9d9">stm32f103c8t6mini_pc13led.xml</div>
<svg class="a" style="left:49px;top:448px" width="16" height="16"><use href="#i-ld"/></svg>
<div class="a tree" style="left:68px;top:446px;line-height:20px;color:#d9d9d9">STM32F103C8Tx_FLASH.ld</div>

<!-- editor -->
<div class="a" style="left:421px;top:78px;width:470px;height:781px;border-radius:6px 6px 6px 6px;background:#212121;overflow:hidden">
 <div class="a hdr" style="left:89px;top:0;width:381px;height:28px"></div>
 <div class="a" style="left:0;top:0;width:89px;height:30px;background:#2b2b2b;border-radius:6px 6px 0 0"></div>
 <div class="a" style="left:0;top:28px;width:470px;height:2px;background:#2b2b2b"></div>
</div>
<svg class="a" style="left:427px;top:84px" width="14" height="16"><path d="M1.5 1.5 L8.5 1.5 L11.5 4.5 L11.5 14.5 L1.5 14.5 Z" fill="#f4f6fb" stroke="#c9a24e"/><path d="M8.5 1.5 V4.5 H11.5" fill="#e9d7a8" stroke="#c9a24e"/><text x="7" y="12" font-size="9.5" font-weight="bold" text-anchor="middle" fill="#1d5aa8" font-family="Liberation Sans">c</text><rect x="2.5" y="10.5" width="1.5" height="1.5" fill="#1d5aa8"/></svg>
<div class="a tabt" style="left:445px;top:85px;line-height:16px">*main.c</div>
<svg class="a" style="left:492px;top:87px" width="10" height="10"><path d="M2 2 L8 8 M8 2 L2 8" stroke="#0b0b0b" stroke-width="3.6" stroke-linecap="round"/><path d="M2 2 L8 8 M8 2 L2 8" stroke="#525a5e" stroke-width="1.4" stroke-linecap="round"/></svg>
<div class="a" style="left:840px;top:87px;width:10px;height:4px;border:1.5px solid #0e0e0e;background:#555"></div>
<div class="a" style="left:866px;top:87px;width:10px;height:10px;border:2px solid #0a0a0a;background:#3f4548;box-shadow:inset 0 1px 0 #0a0a0a"></div>
<!-- ruler -->
<div class="a" style="left:423px;top:109px;width:12px;height:640px;background:repeating-conic-gradient(#8ec4ee 0 25%,#2c2e33 0 50%) 0 0/2px 2px"></div>
<div class="a" style="left:435px;top:109px;width:21px;height:738px;background:#24355a"></div>
<div class="a" style="left:456px;top:109px;width:9px;height:738px;background:#3b4446"></div>
<div class="a" style="left:465px;top:109px;width:1px;height:741px;background:#1e1e1e"></div>
<div class="a" style="left:466px;top:109px;width:402px;height:741px;background:#24355a;overflow:hidden" id="codebg"></div>
<div class="a" style="left:466px;top:850px;width:402px;height:8px;background:#3a3e42"></div>
<div class="a" style="left:868px;top:109px;width:8px;height:749px;background:#3a3e42"></div>
<div class="a" style="left:876px;top:109px;width:14px;height:749px;background:#222"></div>
<div class="a" style="left:878px;top:408px;width:9px;height:70px;background:#5a4218;border:1px solid #f0a010"></div>
<div class="a" style="left:468px;top:494px;width:400px;height:15px;background:#55574f"></div>
<div class="a" style="left:422px;top:494px;width:13px;height:15px;background:#24355a"></div>
<div class="a" style="left:423px;top:494px;width:12px;height:15px;background:#e9a93a;color:#333;font-size:11px;font-weight:bold;text-align:center;line-height:15px">?</div>
<div class="a" style="left:435px;top:109px;width:433px;height:741px;overflow:hidden">
<div class="a" style="left:-435px;top:-109px;width:1573px;height:901px">
<div class="a code mono" style="left:421px;width:35px;text-align:right;top:106px;color:#d6d6d6">62</div>
<div class="a code mono" style="left:421px;width:35px;text-align:right;top:121px;color:#d6d6d6">63</div>
<div class="a code mono" style="left:421px;width:35px;text-align:right;top:136px;color:#d6d6d6">64</div>
<div class="a code mono" style="left:421px;width:35px;text-align:right;top:151px;color:#d6d6d6">65</div>
<div class="a code mono" style="left:421px;width:35px;text-align:right;top:166px;color:#d6d6d6">66</div>
<div class="a code mono" style="left:421px;width:35px;text-align:right;top:181px;color:#d6d6d6">67</div>
<div class="a code mono" style="left:421px;width:35px;text-align:right;top:196px;color:#d6d6d6">68</div>
<div class="a code mono" style="left:421px;width:35px;text-align:right;top:211px;color:#d6d6d6">69</div>
<div class="a code mono" style="left:421px;width:35px;text-align:right;top:226px;color:#d6d6d6">70</div>
<div class="a code mono" style="left:421px;width:35px;text-align:right;top:241px;color:#d6d6d6">71</div>
<div class="a code mono" style="left:421px;width:35px;text-align:right;top:256px;color:#d6d6d6">72</div>
<div class="a code mono" style="left:421px;width:35px;text-align:right;top:271px;color:#d6d6d6">73</div>
<div class="a code mono" style="left:421px;width:35px;text-align:right;top:286px;color:#d6d6d6">74</div>
<div class="a code mono" style="left:421px;width:35px;text-align:right;top:301px;color:#d6d6d6">75</div>
<div class="a code mono" style="left:421px;width:35px;text-align:right;top:316px;color:#d6d6d6">76</div>
<div class="a code mono" style="left:421px;width:35px;text-align:right;top:331px;color:#d6d6d6">77</div>
<div class="a code mono" style="left:421px;width:35px;text-align:right;top:346px;color:#d6d6d6">78</div>
<div class="a code mono" style="left:421px;width:35px;text-align:right;top:361px;color:#d6d6d6">79</div>
<div class="a code mono" style="left:421px;width:35px;text-align:right;top:376px;color:#d6d6d6">80</div>
<div class="a code mono" style="left:421px;width:35px;text-align:right;top:391px;color:#d6d6d6">81</div>
<div class="a code mono" style="left:421px;width:35px;text-align:right;top:406px;color:#d6d6d6">82</div>
<div class="a code mono" style="left:421px;width:35px;text-align:right;top:421px;color:#d6d6d6">83</div>
<div class="a code mono" style="left:421px;width:35px;text-align:right;top:436px;color:#d6d6d6">84</div>
<div class="a code mono" style="left:421px;width:35px;text-align:right;top:451px;color:#d6d6d6">85</div>
<div class="a code mono" style="left:421px;width:35px;text-align:right;top:466px;color:#d6d6d6">86</div>
<div class="a code mono" style="left:421px;width:35px;text-align:right;top:481px;color:#d6d6d6">87</div>
<div class="a code mono" style="left:421px;width:35px;text-align:right;top:496px;color:#d6d6d6">88</div>
<div class="a code mono" style="left:421px;width:35px;text-align:right;top:511px;color:#d6d6d6">89</div>
<div class="a code mono" style="left:421px;width:35px;text-align:right;top:526px;color:#d6d6d6">90</div>
<div class="a code mono" style="left:421px;width:35px;text-align:right;top:541px;color:#d6d6d6">91</div>
<div class="a code mono" style="left:421px;width:35px;text-align:right;top:556px;color:#d6d6d6">92</div>
<div class="a code mono" style="left:421px;width:35px;text-align:right;top:571px;color:#d6d6d6">93</div>
<div class="a code mono" style="left:421px;width:35px;text-align:right;top:586px;color:#d6d6d6">94</div>
<div class="a code mono" style="left:421px;width:35px;text-align:right;top:601px;color:#d6d6d6">95</div>
<div class="a code mono" style="left:421px;width:35px;text-align:right;top:616px;color:#d6d6d6">96</div>
<div class="a code mono" style="left:421px;width:35px;text-align:right;top:631px;color:#d6d6d6">97</div>
<div class="a code mono" style="left:421px;width:35px;text-align:right;top:646px;color:#d6d6d6">98</div>
<div class="a code mono" style="left:421px;width:35px;text-align:right;top:661px;color:#d6d6d6">99</div>
<div class="a code mono" style="left:421px;width:35px;text-align:right;top:676px;color:#d6d6d6">100</div>
<div class="a code mono" style="left:421px;width:35px;text-align:right;top:691px;color:#d6d6d6">101</div>
<div class="a code mono" style="left:421px;width:35px;text-align:right;top:706px;color:#d6d6d6">102</div>
<div class="a code mono" style="left:421px;width:35px;text-align:right;top:721px;color:#d6d6d6">103</div>
<div class="a code mono" style="left:421px;width:35px;text-align:right;top:736px;color:#d6d6d6">104</div>
<div class="a code mono" style="left:421px;width:35px;text-align:right;top:751px;color:#d6d6d6">105</div>
<div class="a code mono" style="left:421px;width:35px;text-align:right;top:766px;color:#d6d6d6">106</div>
<div class="a code mono" style="left:421px;width:35px;text-align:right;top:781px;color:#d6d6d6">107</div>
<div class="a code mono" style="left:421px;width:35px;text-align:right;top:796px;color:#d6d6d6">108</div>
<div class="a code mono" style="left:421px;width:35px;text-align:right;top:811px;color:#d6d6d6">109</div>
<div class="a code mono" style="left:421px;width:35px;text-align:right;top:826px;color:#d6d6d6">110</div>
<div class="a code mono" style="left:421px;width:35px;text-align:right;top:841px;color:#d6d6d6">111</div>
<div class="a code mono" style="left:468px;top:106px"><b style="color:#f2f2f2">int</b> main(<b style="color:#f2f2f2">void</b>)</div>
<div class="a code mono" style="left:468px;top:121px">{</div>
<div class="a code mono" style="left:468px;top:136px"></div>
<div class="a code mono" style="left:468px;top:151px">  <span style="color:#c2da22">/* USER CODE BEGIN 1 */</span></div>
<div class="a code mono" style="left:468px;top:166px"></div>
<div class="a code mono" style="left:468px;top:181px">  <span style="color:#c2da22">/* USER CODE END 1 */</span></div>
<div class="a code mono" style="left:468px;top:196px"></div>
<div class="a code mono" style="left:468px;top:211px">  <span style="color:#c2da22">/* MCU Configuration----------------------------------------------------------*/</span></div>
<div class="a code mono" style="left:468px;top:226px"></div>
<div class="a code mono" style="left:468px;top:241px">  <span style="color:#c2da22">/* Reset of all peripherals, Initializes the Flash interface and the Systick. */</span></div>
<div class="a code mono" style="left:468px;top:256px">  HAL_Init();</div>
<div class="a code mono" style="left:468px;top:271px"></div>
<div class="a code mono" style="left:468px;top:286px">  <span style="color:#c2da22">/* Configure the system clock */</span></div>
<div class="a code mono" style="left:468px;top:301px">  SystemClock_Config();</div>
<div class="a code mono" style="left:468px;top:316px"></div>
<div class="a code mono" style="left:468px;top:331px">  <span style="color:#c2da22">/* Initialize all configured peripherals */</span></div>
<div class="a code mono" style="left:468px;top:346px">  MX_GPIO_Init();</div>
<div class="a code mono" style="left:468px;top:361px">  MX_TIM2_Init();</div>
<div class="a code mono" style="left:468px;top:376px"></div>
<div class="a code mono" style="left:468px;top:391px"></div>
<div class="a code mono" style="left:468px;top:406px">  <span style="color:#c2da22">/* USER CODE BEGIN 2 */</span></div>
<div class="a code mono" style="left:468px;top:421px">  HAL_TIM_PWM_Start(&amp;htim2, TIM_CHANNEL_1);</div>
<div class="a code mono" style="left:468px;top:436px">  HAL_TIM_PWM_Start(&amp;htim2, TIM_CHANNEL_2);</div>
<div class="a code mono" style="left:468px;top:451px">  HAL_TIM_PWM_Start(&amp;htim2, TIM_CHANNEL_3);</div>
<div class="a code mono" style="left:468px;top:466px">  HAL_TIM_PWM_Start(&amp;htim2, TIM_CHANNEL_4);</div>
<div class="a code mono" style="left:468px;top:481px">  HAL_Delay(<span style="color:#7cc35a">10000</span>);</div>
<div class="a code mono" style="left:468px;top:496px">  &amp;htim2-&gt;</div>
<div class="a code mono" style="left:468px;top:511px">  <span style="color:#c2da22">/* USER CODE END 2 */</span></div>
<div class="a code mono" style="left:468px;top:526px"></div>
<div class="a code mono" style="left:468px;top:541px">  <span style="color:#c2da22">/* Infinite loop */</span></div>
<div class="a code mono" style="left:468px;top:556px">  <span style="color:#c2da22">/* USER CODE BEGIN WHILE */</span></div>
<div class="a code mono" style="left:468px;top:571px">  <b style="color:#f2f2f2">while</b> (<span style="color:#7cc35a">1</span>)</div>
<div class="a code mono" style="left:468px;top:586px">  {</div>
<div class="a code mono" style="left:468px;top:601px">  <span style="color:#c2da22">/* USER CODE END WHILE */</span></div>
<div class="a code mono" style="left:468px;top:616px">      HAL_</div>
<div class="a code mono" style="left:468px;top:631px">      HAL_</div>
<div class="a code mono" style="left:468px;top:646px"></div>
<div class="a code mono" style="left:468px;top:661px">  <span style="color:#c2da22">/* USER CODE BEGIN 3 */</span></div>
<div class="a code mono" style="left:468px;top:676px"></div>
<div class="a code mono" style="left:468px;top:691px">  }</div>
<div class="a code mono" style="left:468px;top:706px">  <span style="color:#c2da22">/* USER CODE END 3 */</span></div>
<div class="a code mono" style="left:468px;top:721px"></div>
<div class="a code mono" style="left:468px;top:736px">}</div>
<div class="a code mono" style="left:468px;top:751px"></div>
<div class="a code mono" style="left:468px;top:766px"><span style="color:#c2da22">/** System Clock Configuration</span></div>
<div class="a code mono" style="left:468px;top:781px"><span style="color:#c2da22">*/</span></div>
<div class="a code mono" style="left:468px;top:796px"><b style="color:#f2f2f2">void</b> SystemClock_Config(<b style="color:#f2f2f2">void</b>)</div>
<div class="a code mono" style="left:468px;top:811px">{</div>
<div class="a code mono" style="left:468px;top:826px"></div>
<div class="a code mono" style="left:468px;top:841px">  <b style="color:#e05555">RCC_OscInitTypeDef</b> RCC_OscInitStruct;</div>
<svg class="a" style="left:481px;top:507px" width="59" height="3"><rect width="59" height="3" fill="url(#sqp)"/></svg>
<svg class="a" style="left:468px;top:522px" width="72" height="3"><rect width="72" height="3" fill="url(#sqp)"/></svg>
<svg class="a" style="left:468px;top:552px" width="72" height="3"><rect width="72" height="3" fill="url(#sqp)"/></svg>
<svg class="a" style="left:468px;top:567px" width="72" height="3"><rect width="72" height="3" fill="url(#sqp)"/></svg>
<svg class="a" style="left:468px;top:582px" width="72" height="3"><rect width="72" height="3" fill="url(#sqp)"/></svg>
<svg class="a" style="left:468px;top:597px" width="22" height="3"><rect width="22" height="3" fill="url(#sqp)"/></svg>
<svg class="a" style="left:468px;top:612px" width="72" height="3"><rect width="72" height="3" fill="url(#sqp)"/></svg>
<svg class="a" style="left:468px;top:627px" width="72" height="3"><rect width="72" height="3" fill="url(#sqp)"/></svg>
<svg class="a" style="left:468px;top:642px" width="72" height="3"><rect width="72" height="3" fill="url(#sqp)"/></svg>
<svg class="a" style="left:468px;top:672px" width="72" height="3"><rect width="72" height="3" fill="url(#sqp)"/></svg>
<svg class="a" style="left:468px;top:702px" width="22" height="3"><rect width="22" height="3" fill="url(#sqp)"/></svg>
<svg class="a" style="left:457px;top:106px" width="9" height="9"><rect x="0.5" y="0.5" width="8" height="8" rx="2.5" fill="#e8ebf0" stroke="#a9b0b8"/><path d="M2 4.5 H7" stroke="#555"/></svg>
<svg class="a" style="left:457px;top:766px" width="9" height="9"><rect x="0.5" y="0.5" width="8" height="8" rx="2.5" fill="#e8ebf0" stroke="#a9b0b8"/><path d="M2 4.5 H7" stroke="#555"/></svg>
<svg class="a" style="left:457px;top:796px" width="9" height="9"><rect x="0.5" y="0.5" width="8" height="8" rx="2.5" fill="#e8ebf0" stroke="#a9b0b8"/><path d="M2 4.5 H7" stroke="#555"/></svg>
</div></div>


<!-- console -->
<div class="a" style="left:897px;top:78px;width:673px;height:781px;border-radius:6px;background:#2e2e2e;overflow:hidden">
 <div class="a hdr" style="left:0;top:0;width:673px;height:27px"></div>
 <div class="a tab" style="left:0;top:0;width:91px;height:27px"></div>
 <div class="a" style="left:0;top:27px;width:673px;height:19px;background:#383c40"></div>
 <div class="a" style="left:663px;top:47px;width:7px;height:734px;background:#393d42"></div>
</div>
<svg class="a" style="left:902px;top:84px" width="16" height="16"><rect x="1.5" y="1.5" width="13" height="10" rx="1" fill="#e8f0fa" stroke="#2c5fb8" stroke-width="1.5"/><path d="M4 5 H11 M4 7.5 H9" stroke="#2c5fb8"/><path d="M3 14.5 H13" stroke="#2c5fb8" stroke-width="1.5"/></svg>
<div class="a tabt" style="left:921px;top:85px;line-height:16px">Console</div>
<svg class="a" style="left:971px;top:87px" width="10" height="10"><path d="M2 2 L8 8 M8 2 L2 8" stroke="#0b0b0b" stroke-width="3.6" stroke-linecap="round"/><path d="M2 2 L8 8 M8 2 L2 8" stroke="#525a5e" stroke-width="1.4" stroke-linecap="round"/></svg>
<svg class="a" style="left:993px;top:84px" width="16" height="16"><rect x="1.5" y="1.5" width="12" height="13" fill="#f4f6fb" stroke="#a99"/><circle cx="6" cy="5" r="2.5" fill="#e02020"/><path d="M4 13 L6 9 L8 13 Z" fill="#f0a010"/><path d="M10 3 V13" stroke="#bbb"/></svg>
<div class="a tabt" style="left:1012px;top:85px;line-height:16px">Problems</div>
<div class="a" style="left:1244px;top:80px;width:24px;height:24px;border-radius:3px;background:#2f3236"></div>
<div class="a" style="left:1334px;top:80px;width:24px;height:24px;border-radius:3px;background:#2f3236"></div>
<svg class="a" style="left:1196px;top:84px" width="16" height="16"><path d="M6 1.5 H10 V8.5 H13.5 L8 14.5 L2.5 8.5 H6 Z" fill="#fbd45a" stroke="#d08a10" stroke-width="1"/></svg>
<svg class="a" style="left:1222px;top:84px" width="16" height="16"><path d="M6 14.5 H10 V7.5 H13.5 L8 1.5 L2.5 7.5 H6 Z" fill="#fbd45a" stroke="#d08a10" stroke-width="1"/></svg>
<svg class="a" style="left:1248px;top:84px" width="16" height="16"><path d="M1.5 5 L5.5 1.5 V3.5 H11 V6.5 H5.5 V8.5 Z" fill="#fce8a8" stroke="#d08a10" stroke-width="1"/><path d="M14.5 11 L10.5 7.5 V9.5 H5 V12.5 H10.5 V14.5 Z" fill="#fce8a8" stroke="#d08a10" stroke-width="1"/></svg>
<div class="a" style="left:1274px;top:85px;width:1px;height:14px;background:#3a3d3f"></div>
<svg class="a" style="left:1286px;top:84px" width="16" height="16"><rect x="2.5" y="1.5" width="9" height="13" fill="#dde6f2" stroke="#8899aa"/><rect x="11.5" y="3" width="3" height="10" fill="#ccd"/><rect x="1" y="9" width="7" height="6" fill="#9fb4d0" stroke="#6a7c99"/></svg>
<svg class="a" style="left:1312px;top:84px" width="16" height="16"><rect x="2.5" y="1.5" width="9" height="13" fill="#dde6f2" stroke="#8899aa"/><rect x="11.5" y="3" width="3" height="10" fill="#ccd"/><rect x="2" y="9" width="7" height="6" fill="#e8a818"/><path d="M3.5 9 V7.5 A2 2 0 0 1 7.5 7.5 V9" stroke="#e8a818" fill="none" stroke-width="1.3"/></svg>
<svg class="a" style="left:1338px;top:84px" width="16" height="16"><path d="M3 4.5 H13 M3 7.5 H9 M3 10.5 H9" stroke="#e6e6e6"/></svg>
<svg class="a" style="left:1364px;top:84px" width="16" height="16"><path d="M2.5 1.5 H9.5 L12.5 4.5 V14.5 H2.5 Z" fill="#f4f6fb" stroke="#c9a24e"/><path d="M4 6 H10 M4 8 H10 M4 10 H8" stroke="#6d8fcf"/><path d="M10 10 L15 15 M15 10 L10 15" stroke="#999" stroke-width="1.5"/></svg>
<div class="a" style="left:1391px;top:85px;width:1px;height:14px;background:#3a3d3f"></div>
<svg class="a" style="left:1402px;top:84px" width="16" height="16"><rect x="1.5" y="5.5" width="13" height="9" fill="#f0f4fa" stroke="#8aa"/><path d="M1.5 5.5 H14.5 V7.5 H1.5 Z" fill="#5b9be0"/><path d="M7 11 L12 4" stroke="#555"/><circle cx="12" cy="4" r="3" fill="#3ca83c"/></svg>
<svg class="a" style="left:1428px;top:84px" width="16" height="16"><rect x="1.5" y="1.5" width="13" height="10" rx="1" fill="#e8f0fa" stroke="#2c5fb8" stroke-width="1.5"/><path d="M4 5 H11 M4 7.5 H9" stroke="#2c5fb8"/><path d="M3 14.5 H13" stroke="#2c5fb8" stroke-width="1.5"/></svg>
<svg class="a" style="left:1453px;top:88px" width="10" height="9"><use href="#t-down"/></svg>
<svg class="a" style="left:1472px;top:84px" width="16" height="16"><rect x="1.5" y="3.5" width="12" height="11" fill="#f0f4fa" stroke="#c9a24e"/><path d="M1.5 3.5 H13.5 V5.5 H1.5 Z" fill="#5b9be0"/><path d="M13 1 L14 3 L16 4 L14 5 L13 7 L12 5 L10 4 L12 3 Z" fill="#f5d070"/></svg>
<svg class="a" style="left:1497px;top:88px" width="10" height="9"><use href="#t-down"/></svg>
<div class="a" style="left:1519px;top:87px;width:10px;height:4px;border:1.5px solid #0e0e0e;background:#555"></div>
<div class="a" style="left:1545px;top:87px;width:10px;height:10px;border:2px solid #0a0a0a;background:#3f4548;box-shadow:inset 0 1px 0 #0a0a0a"></div>
<div class="a" style="left:899px;top:110px;font-size:12px;line-height:16px;color:#9fd2d2;white-space:nowrap">CDT Build Console [PWM_test_TIMER234_only]</div>
<div class="a code mono" style="left:901px;top:126px;color:#1c1cf2">16:54:19 **** Incremental Build of configuration Debug for project PWM_test_TIMER234_only ****</div>
<div class="a code mono" style="left:901px;top:141px;color:#141414">make all</div>
<div class="a code mono" style="left:901px;top:156px;color:#141414">make: Nothing to be done for `all'.</div>
<div class="a code mono" style="left:901px;top:186px;color:#1c1cf2">16:54:20 Build Finished (took 133ms)</div>




<div class="a" style="left:422px;top:847px;width:44px;height:11px;background:#212121"></div>
<!-- status -->
<div class="a" style="left:995px;top:864px;width:1px;height:22px;background:#45494b"></div>
<div class="a" style="left:1097px;top:864px;width:1px;height:22px;background:#45494b"></div>
<div class="a" style="left:1194px;top:864px;width:1px;height:22px;background:#45494b"></div>
<div class="a" style="left:1001px;top:867px;font-size:12px;line-height:16px;color:#dedede;white-space:nowrap">Writable</div>
<div class="a" style="left:1104px;top:867px;font-size:12px;line-height:16px;color:#dedede;white-space:nowrap">Smart Insert</div>
<div class="a" style="left:1201px;top:867px;font-size:12px;line-height:16px;color:#dedede;white-space:nowrap">88 : 11</div>
<div class="a" style="left:1289px;top:866px;width:2px;height:20px;background:repeating-linear-gradient(#d8d8d8 0 2px,transparent 2px 5px)"></div>
<!-- popup -->
<div class="a" style="left:538px;top:509px;width:360px;height:247px;background:#2a2d30"></div>
<div class="a" style="left:540px;top:510px;width:358px;height:245px;background:#fff;border:1px solid #a6cdef"></div>
<div class="a" style="left:541px;top:554px;width:356px;height:21px;background:#8ec0eb"></div>
<div class="a" style="left:541px;top:739px;width:356px;height:15px;background:#525658"></div>
<div class="a" style="left:664px;top:738px;font-size:11px;letter-spacing:0px;line-height:17px;color:#ececec;white-space:nowrap">Press 'Ctrl+Space' to show Template Proposals</div>
<svg class="a" style="left:548px;top:518px" width="8" height="8"><circle cx="4" cy="4" r="2.6" fill="none" stroke="#2e8b3a" stroke-width="1.5"/></svg>
<div class="a" style="left:563px;top:513px;font-size:12px;line-height:20px;color:#111;white-space:nowrap">Channel : HAL_TIM_ActiveChannel</div>
<svg class="a" style="left:548px;top:539px" width="8" height="8"><circle cx="4" cy="4" r="2.6" fill="none" stroke="#2e8b3a" stroke-width="1.5"/></svg>
<div class="a" style="left:563px;top:534px;font-size:12px;line-height:20px;color:#111;white-space:nowrap">Init : TIM_Base_InitTypeDef</div>
<svg class="a" style="left:548px;top:560px" width="8" height="8"><circle cx="4" cy="4" r="2.6" fill="none" stroke="#2e8b3a" stroke-width="1.5"/></svg>
<div class="a" style="left:563px;top:555px;font-size:12px;line-height:20px;color:#3a3a3a;white-space:nowrap">Instance : TIM_TypeDef *</div>
<svg class="a" style="left:548px;top:581px" width="8" height="8"><circle cx="4" cy="4" r="2.6" fill="none" stroke="#2e8b3a" stroke-width="1.5"/></svg>
<div class="a" style="left:563px;top:576px;font-size:12px;line-height:20px;color:#111;white-space:nowrap">Lock : HAL_LockTypeDef</div>
<svg class="a" style="left:548px;top:602px" width="8" height="8"><circle cx="4" cy="4" r="2.6" fill="none" stroke="#2e8b3a" stroke-width="1.5"/></svg>
<div class="a" style="left:563px;top:597px;font-size:12px;line-height:20px;color:#111;white-space:nowrap">State : volatile HAL_TIM_StateTypeDef</div>
<svg class="a" style="left:548px;top:623px" width="8" height="8"><circle cx="4" cy="4" r="2.6" fill="none" stroke="#2e8b3a" stroke-width="1.5"/></svg>
<div class="a" style="left:563px;top:618px;font-size:12px;line-height:20px;color:#111;white-space:nowrap">hdma : DMA_HandleTypeDef * [7]</div>
<svg class="a" style="left:582px;top:566px" width="14" height="20"><path d="M1 1 L1 15 L4.5 11.5 L7 17 L9.5 16 L7 10.5 L12 10.5 Z" fill="#111" stroke="#fff" stroke-width="1"/></svg>
</body></html>
